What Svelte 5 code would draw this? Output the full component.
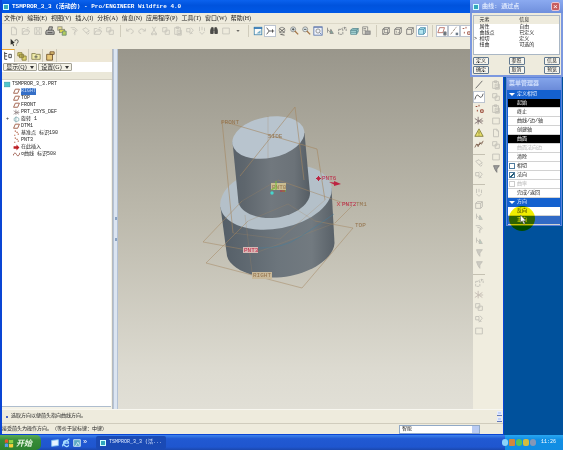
<script>
  const menus = ['文件(F)', '编辑(E)', '视图(V)', '插入(I)', '分析(A)', '信息(N)', '应用程序(P)', '工具(T)', '窗口(W)', '帮助(H)'];
  const toolbar = [
    ['new', 'open', 'save', 'print', 'mail', 'send', 'link', 'folder', 'copies'],
    ['undo', 'redo', 'cut', 'copies', 'paste', 'special', 'regen', 'find', 'box', 'drop'],
    ['repaint', 'axis on', 'orient', 'zoomin', 'zoomout', 'refit', 'spin', 'views', 'layers', 'manager'],
    ['wire', 'hidden', 'nohidden', 'shaded on'],
    ['plane on', 'axisline on', 'points on']
  ];
  const live = ['print', 'mail', 'find', 'drop', 'repaint', 'axis', 'orient', 'zoomin', 'zoomout', 'refit', 'spin', 'views', 'layers', 'manager', 'wire', 'hidden', 'nohidden', 'shaded', 'plane', 'axisline', 'points'];
  const tree = [
    ['part', 'TSMPROR_3_3.PRT', 0],
    ['datum', 'RIGHT', 1, true],
    ['datum', 'TOP', 1],
    ['datum', 'FRONT', 1],
    ['csys', 'PRT_CSYS_DEF', 1],
    ['revolve', '旋转 1', 1],
    ['datum', 'DTM1', 1],
    ['pts', '基准点 标识190', 1],
    ['pts', 'PNT3', 1],
    ['insert', '在此插入', 1],
    ['curve', '¤曲线 标识508', 1]
  ];
  const elements = [['', '属性', '自由'], ['', '曲线点', '已定义'], ['>', '相切', '定义'], ['', '扭曲', '可选的']];
  const tangency = [
    ['起始', 'black'], ['终止', ''], ['曲线/边/轴', ''], ['创建轴', ''], ['曲面', 'black'], ['曲面法向边', 'dim'], ['清除', '']
  ];
  const checks = [['相切', false, false], ['法向', true, false], ['曲率', false, true]];
  const columnA = [['axisline', 'spline on', 'points', 'csys', 'warn', 'chain'], ['link', 'special'], ['regen', 'nohidden', 'spin', 'send', 'spin', 'funnel', 'funnel'], ['views', 'csys', 'copies', 'special', 'box']];
  const columnB = ['paste', 'copies', 'paste', 'box', 'new', 'copies', 'box', 'funnel'];
</script>

{#snippet icon(name)}
  <svg viewBox="0 0 12 12" class="ico" aria-hidden="true">
    {#if name === 'new'}<path d="M3 1.5h4l2 2v7H3zM7 1.5v2h2" />
    {:else if name === 'open' || name === 'folder'}<path d="M1.5 10V3h3l1 1h3v2M1.5 10l2-4h7l-2 4zM7 2q2-1 3 1" />
    {:else if name === 'save'}<path d="M2 2h8v8H2zM4 2v3h4V2M4 10V7h4v3" />
    {:else if name === 'print'}<path d="M4 5l1-4h4L8 5M2 5h8l1 2v3H1V7z" fill="#aaa" stroke="#333" /><path d="M3 8h6" stroke="#222" />
    {:else if name === 'mail'}<rect x="1" y="1" width="5" height="4" fill="#eee38a" stroke="#776" /><rect x="3" y="4" width="6" height="4" fill="#d5cf34" stroke="#776" /><path d="M7 6h4v5H6z" fill="#a7c747" stroke="#576" />
    {:else if name === 'send'}<path d="M2 2h5l3 3-3 3M4 4l4 1-2 4M7 8v3" />
    {:else if name === 'link'}<path d="M2 4l4-2 4 4-4 2zM6 8l2 2 2-2" />
    {:else if name === 'copies'}<path d="M2 2h5v5H2zM5 5h5v5H5z" />
    {:else if name === 'undo'}<path d="M2 3v3h3M2 6q5-5 8 0 0 3-3 3" />
    {:else if name === 'redo'}<path d="M10 3v3H7M10 6Q5 1 2 6q0 3 3 3" />
    {:else if name === 'cut'}<path d="M4 1l4 7M8 1L4 8M3 8.500h2v2H3zM7 8.500h2v2H7z" />
    {:else if name === 'paste'}<path d="M2 2h7v8H2zM4 1h3v2H4zM5 5h5v6H5zM6 7h3M6 9h3" />
    {:else if name === 'special'}<path d="M2 3h4v4H2zM7 2l3 3-4 5M5 8l4 1" />
    {:else if name === 'regen'}<path d="M3 1v5M6 1v4M9 2v4M3 7l3 3 3-3" />
    {:else if name === 'find'}<path d="M2 9V5l1-3h2v7zM7 9V2h2l1 3v4zM5 5h2" fill="#333" stroke="#222" />
    {:else if name === 'box'}<path d="M2 2.500h8v7H2z" />
    {:else if name === 'drop'}<path d="M4 5h4L6 7z" fill="#222" stroke="none" />
    {:else if name === 'repaint'}<rect x="1.500" y="1.500" width="9" height="9" fill="#fff" stroke="#2876a8" /><path d="M1 2.500h10" stroke="#1767b1" stroke-width="2" /><path d="M4 9l5-4v4z" fill="#63a4c5" stroke="none" />
    {:else if name === 'axis'}<path d="M2 2l3 4-3 4M5 6h6M9 4v4" stroke="#222" />
    {:else if name === 'orient'}<circle cx="6" cy="5" r="3.500" /><path d="M3 3l6 5M9 3L3 8M4 10l5 1" stroke="#333" />
    {:else if name === 'zoomin' || name === 'zoomout'}<circle cx="5" cy="4" r="3" fill="#dbeaf2" /><path d="M7 6l4 4" stroke="#98602b" stroke-width="1.500" /><path d={name === 'zoomin' ? 'M3.500 4h3M5 2.500v3' : 'M3.500 4h3'} stroke="#222" />
    {:else if name === 'refit'}<rect x="1" y="1" width="10" height="10" fill="#eef3ff" stroke="#3e5ea2" /><circle cx="6" cy="6" r="2.500" /><path d="M1 1.500h10M8 8l2 2" stroke="#3e5ea2" />
    {:else if name === 'spin'}<path d="M3 2v6M3 4l4 4M7 4l3 5H6z" fill="#6b9f94" />
    {:else if name === 'views'}<path d="M2 4h5v6H2zM5 4l2-2h4v4M9 1v4" stroke-dasharray="3 1" />
    {:else if name === 'layers'}<path d="M2 5l2-2h7L9 5zM2 5h7v5H2zM9 5l2-2v4l-2 3" fill="#a5dbdd" stroke="#417b85" /><path d="M2 7.500h7l2-2" stroke="#417b85" />
    {:else if name === 'manager'}<path d="M2 1h6v9H2zM3 3h3M3 5h3" /><rect x="5" y="6" width="6" height="4" fill="#999" />
    {:else if name === 'wire' || name === 'hidden' || name === 'nohidden' || name === 'shaded'}
      <path d="M2 4h6v6H2zM2 4l2-2h6v6L8 10M8 4l2-2" fill={name === 'shaded' ? '#a9e1ee' : 'none'} stroke={name === 'shaded' ? '#24779b' : '#666'} />
      {#if name === 'wire'}<path d="M4 2v6h6M4 8l-2 2" />{:else if name === 'hidden'}<path d="M4 2v6h6" stroke-dasharray="1 1" />{/if}
    {:else if name === 'plane'}<path d="M1 8l2-6h6L7 8z" stroke="#a34a3c" /><path d="M8 7h3v4H8z" fill="#456" />
    {:else if name === 'axisline'}<path d="M2 10l7-9" stroke="#765" stroke-dasharray="4 1" /><path d="M8 8h3v3H8z" fill="#567" stroke="none" />
    {:else if name === 'points'}<path d="M2 3h2M6 1v2M4 7v2M8 7h3v3H8z" stroke="#9a4a38" stroke-width="1.200" />
    {:else if name === 'line'}<path d="M2 10l8-9" stroke="#555" />
    {:else if name === 'spline'}<path d="M1 9q2-8 5-4t5-3" stroke="#444" />
    {:else if name === 'csys'}<path d="M1 3l9 6M1 9l9-6M5 1v9M7 6h4" stroke="#766" />
    {:else if name === 'warn'}<path d="M6 1l5 9H1zM6 4v3M6 8v1" fill="#e5dd68" stroke="#7e7b35" />
    {:else if name === 'chain'}<path d="M1 9l2-4 2 3 2-5 2 2 2-4M3 5l3 1 3-3" stroke="#785b49" />
    {:else if name === 'funnel'}<path d="M3 2h7L7 6v4L5 7z" fill="#999" />
    {:else if name === 'part'}<rect x="1" y="2" width="9" height="8" fill="#4fc6ce" stroke="#369ea8" />
    {:else if name === 'datum'}<path d="M1 9l3-7h7L8 9z" stroke="#9a563f" stroke-width="1.500" />
    {:else if name === 'revolve'}<path d="M2 4q4-4 8 0v4q-4 3-8 0zM5 1v10" stroke="#5d9299" />
    {:else if name === 'pts'}<path d="M3 2h2M2 9h2M8 7h2M6 4h2" stroke="#b05d3f" stroke-width="2" />
    {:else if name === 'insert'}<path d="M1 4h5V1l5 5-5 5V8H1z" fill="#bd2026" stroke="none" />
    {:else if name === 'curve'}<path d="M0 8q3-8 6-2t6-3" stroke="#985444" stroke-width="1.500" />
    {:else if name === 'modeltree'}<path d="M2 1v9M2 3h3M2 6h3M2 10h3M7 4h3v4H7z" stroke="#333" />
    {:else if name === 'browser'}<path d="M1 2h5v4H1zM3 4h5v4H3zM6 6h5v5H6z" fill="#e0d66d" stroke="#84793a" />
    {:else if name === 'favorites'}<path d="M1 10V3h4l1 1h5v6z" fill="#eee9a7" stroke="#85804e" /><path d="M6 5v4M4 7h4" stroke="#555" />
    {:else if name === 'tools'}<path d="M2 4h7v7H2zM6 1h5v3H6z" fill="#e8c778" stroke="#70502d" />
    {/if}
  </svg>
{/snippet}

<div class="desktop">
  <div class="space">
    <main class="window">
      <header class="title"><span class="cube"></span>TSMPROR_3_3 (活动的) - Pro/ENGINEER Wildfire 4.0</header>
      <nav class="menu">{#each menus as m}<button>{m}</button>{/each}</nav>
      <div class="toolbar">
        {#each toolbar as group}
          <div class="group">
            {#each group as item}
              {@const name = item.split(' ')[0]}
              <button class="tool" class:on={item.endsWith(' on')} class:faint={!live.includes(name)} aria-label={name}>{@render icon(name)}</button>
            {/each}
          </div>
        {/each}
      </div>
      <div class="toolbar second">
        <button class="tool" aria-label="help"><svg viewBox="0 0 12 12" class="ico"><path d="M2 1l5 5H5l1 3-1 1-1-3-2 1z" fill="#111" stroke="none" /><path d="M7 4q0-2 2-2t2 2-2 3M9 8v1" stroke="#333" /></svg></button>
      </div>

      <div class="body">
        <aside class="side">
          <div class="tabs">
            {#each ['modeltree', 'browser', 'favorites', 'tools'] as t, i}<button class:current={i === 0} aria-label={t}>{@render icon(t)}</button>{/each}
          </div>
          <div class="options"><button>显示(Q) <i></i></button><button>设置(G) <i></i></button></div>
          <div class="band"></div>
          <ul class="tree">
            {#each tree as [kind, label, depth, selected]}
              <li class:child={depth}>
                {#if kind === 'revolve'}<span class="plus">+</span>{/if}
                {@render icon(kind)}<span class:selected>{label}</span>
              </li>
            {/each}
          </ul>
        </aside>
        <div class="splitter"><i></i><i></i></div>

        <section class="view">
          <svg viewBox="118 49 355 360" role="img" aria-label="model">
            <defs>
              <linearGradient id="side"><stop offset="0" stop-color="#59626a" /><stop offset=".15" stop-color="#5e666d" /><stop offset=".5" stop-color="#71787e" /><stop offset=".8" stop-color="#6b7278" /><stop offset="1" stop-color="#555d64" /></linearGradient>
              <linearGradient id="base"><stop offset="0" stop-color="#545e67" /><stop offset=".5" stop-color="#6c757c" /><stop offset=".8" stop-color="#727a80" /><stop offset="1" stop-color="#596168" /></linearGradient>
            </defs>
            <path d="M220.500 207L227 256C230 268 250 278 277 277.500C308 276 334 259 334.500 243L331.500 188Z" fill="url(#base)" />
            <ellipse cx="276" cy="197" rx="56.500" ry="31.500" transform="rotate(-11 276 197)" fill="#b4c0c9" />
            <path d="M232.500 142L238.500 203C242 213 256 218.500 272 218C293 217 310 205 310 193L304.500 133Z" fill="url(#side)" />
            <ellipse cx="268.300" cy="137.500" rx="36.500" ry="20.500" transform="rotate(-11 268.300 137.500)" fill="#b8c4ce" />
            <g fill="none" stroke="#a48760" stroke-width=".6">
              <path d="M233 233L222 121L317 149L325 200M295 107L304 180M295 107L240 176" />
              <path d="M203 242L242 201M203 242L258 252M278 180L352 206L335 223M206 263L248 221M315 221L353 228L302 288L206 263" stroke-opacity=".85" />
              <path d="M242 201L278 180M258 252L335 223M248 221L288 204L315 221M245 215L252 272M233 233L280 239L325 200M268 116V158" stroke-opacity=".45" />
            </g>
            <path d="M258 248Q282 249 300 237T334 214" fill="none" stroke="#427f9e" stroke-width=".8" opacity=".6" />
            <g class="tag">
              <text x="221" y="124">FRONT</text><text x="268" y="138">SIDE</text>
              <text x="356" y="206">TM1</text><text x="355" y="227">TOP</text>
              <rect x="252" y="272" width="20" height="7" fill="#c9b99a" /><text x="253" y="277">RIGHT</text>
              <rect x="271" y="183" width="15" height="7" fill="#cabd91" /><text x="272" y="189">PNT0</text>
            </g>
            <path d="M276 181v9M271 190l4-2M282 191h4" stroke="#71bd38" /><path d="M280 191h5" stroke="#c72c38" /><circle cx="272" cy="193" r="1.700" fill="#45d6cf" />
            <g class="tag red">
              <text x="322" y="180">PNT6</text><text x="342" y="206">PNT2</text>
              <rect x="243" y="247" width="15" height="6" fill="#d9b8b5" /><text x="244" y="252">PNT3</text>
              <path d="M316 178.500h5M318.500 176v5" stroke="#b5203c" /><circle cx="318.500" cy="178.500" r="1.800" />
              <path d="M329 182l5 .5V181l7 3-7 2v-1.500z" /><path d="M337 202l3 4M340 202l-3 4" stroke="#c72c38" stroke-width=".6" />
            </g>
          </svg>
        </section>

        <div class="columns">
          <div class="col">
            {#each columnA as part, p}
              <div class="part">{#each part as item, i}<button class="tool" class:on={item.endsWith(' on')} class:faint={p > 0} aria-label={item}>{@render icon(p === 0 && i === 0 ? 'line' : item.split(' ')[0])}</button>{/each}</div>
            {/each}
          </div>
          <div class="col b">{#each columnB as item, i}<button class="tool" class:faint={i < 7} aria-label={item}>{@render icon(item)}</button>{/each}</div>
        </div>
      </div>

      <footer class="messages">
        <div class="line"><p>选取方向以便箭头指向曲线方向。</p><span class="scroll"><i></i><i></i></span></div>
        <div class="line prompt"><span>接受箭头为操作方向。（等价于鼠标键：中键）</span>
          <select aria-label="过滤器"><option>智能</option></select>
        </div>
      </footer>
    </main>

    <section class="dialog">
      <header><span class="cube"></span><b>曲线: 通过点</b><button aria-label="关闭">×</button></header>
      <table>
        <thead><tr><th></th><th>元素</th><th>信息</th></tr></thead>
        <tbody>{#each elements as row}<tr>{#each row as c}<td>{c}</td>{/each}</tr>{/each}</tbody>
      </table>
      <div class="actions">{#each ['定义', '参照', '信息', '确定', '取消', '预览'] as a}<button>{a}</button>{/each}</div>
    </section>

    <section class="manager">
      <header>菜单管理器</header>
      <h2>定义相切</h2>
      <div class="list">
        {#each tangency as [label, kind]}<button class={kind}>{label}</button>{/each}
        {#each checks as [label, checked, disabled]}
          <label class:dim={disabled}><input type="checkbox" {checked} {disabled} />{label}</label>
        {/each}
        <button>完成/返回</button>
      </div>
      <h2>方向</h2>
      <div class="list"><button>反向</button><button class="blue">正向</button></div>
      <span class="halo"></span>
      <svg class="pointer" viewBox="0 0 8 12"><path d="M1 0v9l2-2 2 4 1.500-1-2-3h3z" fill="#fff" stroke="#555" stroke-width=".6" /></svg>
    </section>
  </div>

  <footer class="taskbar">
    <button class="start"><svg viewBox="0 0 12 12" class="ico"><path d="M1 2q2-1 4 0v4q-2-1-4 0z" fill="#e8552d" stroke="none" /><path d="M6 2q2 1 5 0v4q-3 1-5 0z" fill="#8fd244" stroke="none" /><path d="M1 7q2-1 4 0v4q-2-1-4 0z" fill="#5a9cf0" stroke="none" /><path d="M6 7q2 1 5 0v4q-3 1-5 0z" fill="#f6cf3b" stroke="none" /></svg>开始</button>
    <div class="quick">
      <svg viewBox="0 0 12 12" class="ico"><path d="M2 3l8-1v7l-8 1z" fill="#e7f4ff" stroke="#88c9f4" /></svg>
      <svg viewBox="0 0 12 12" class="ico"><path d="M3 6h6q0-3-3-3T3 6t3 4 3-2M2 10Q1 7 10 1" stroke="#a6dcff" stroke-width="1.500" /></svg>
      <svg viewBox="0 0 12 12" class="ico"><path d="M2 2h8v8H2zM4 10l3-5 2 4" fill="#5da9c4" stroke="#d8eef7" /></svg>
      <span>»</span>
    </div>
    <button class="task"><span class="cube"></span>TSMPROR_3_3 (活...</button>
    <div class="tray"><i class="c1"></i><i class="c2"></i><i class="c3"></i><i class="c4"></i><i class="c5"></i><time>11:26</time></div>
  </footer>
</div>

<style>
  .desktop { display: flex; flex-direction: column; min-height: 100vh; background: #00519c; font: 5px/7px "Liberation Mono", "Noto Sans CJK SC", monospace; color: #222; text-spacing-trim: space-all; }
  .desktop :is(button, select, input) { font: inherit; color: inherit; margin: 0; padding: 0; border: 0; background: none; box-sizing: border-box; }
  .space { flex: 1; position: relative; display: flex; padding-right: 59px; }
  .ico { width: 10px; height: 10px; display: block; flex: none; fill: none; stroke: #777; stroke-width: 1; }
  .cube { width: 6px; height: 6px; flex: none; box-sizing: border-box; border: 1px solid #d4ffff; background: #31a8bc; }

  .window { flex: 1; min-width: 0; display: flex; flex-direction: column; background: #eeebdd; border: solid #0a45d4; border-width: 0 1px 1px 2px; }
  .title { height: 13px; display: flex; align-items: center; gap: 3px; padding-left: 1px; white-space: pre; color: #fff; font-size: 6px; font-weight: bold; background: linear-gradient(#0b62ee, #0053dd 40%, #0058e6); }
  .menu { height: 10px; display: flex; align-items: center; gap: 4px; padding-left: 2px; font: 6px/8px "Liberation Serif", "Noto Sans CJK SC", serif; border-bottom: 1px solid #dcd8c8; white-space: nowrap; }
  .toolbar { height: 13px; display: flex; align-items: center; padding-left: 6px; }
  .toolbar.second { height: 12px; padding-left: 6px; }
  .toolbar .tool .ico { opacity: .85; }
  .group { display: flex; }
  .group + .group { margin-left: 4px; padding-left: 3px; border-left: 1px solid #d0ccbc; }
  .desktop .tool { width: 12px; height: 12px; display: grid; place-items: center; flex: none; }
  .desktop .tool.on { background: #fff; border: 1px solid #bcc4cf; }
  .faint { opacity: .4; }

  .body { flex: 1; display: flex; min-height: 0; }
  .side { width: 111px; flex: none; display: flex; flex-direction: column; background: #f5f3e8; border-right: 1px solid #b5b9bd; box-sizing: border-box; }
  .tabs { display: flex; height: 13px; gap: 1px; background: #eee8d7; }
  .desktop .tabs button { width: 13px; display: grid; place-items: center; border-right: 1px solid #ccc8ba; }
  .desktop .tabs .current { background: #fff; border-top: 1px solid #efa62f; }
  .options { display: flex; height: 10px; padding: 1px; gap: 1px; background: #fff; box-sizing: border-box; }
  .desktop .options button { width: 34px; display: flex; align-items: center; justify-content: center; gap: 3px; border: 1px solid #a5a397; border-radius: 1px; background: #f3f1e6; font: 6px/6px "Liberation Serif", "Noto Sans CJK SC", serif; }
  .options i { border: 2px solid transparent; border-top: 3px solid #333; border-bottom: 0; }
  .band { height: 8px; background: #ebe8d9; border-bottom: 1px solid #d7d3c5; box-sizing: border-box; }
  .tree { flex: 1; margin: 0 1px 2px 0; padding: 1px 0 0 2px; list-style: none; background: #fff; border-bottom: 1px solid #aebdce; }
  .tree li { height: 7px; display: flex; align-items: center; gap: 1px; white-space: pre; position: relative; }
  .tree .child { padding-left: 9px; }
  .tree .ico { width: 7px; height: 7px; }
  .tree .selected { background: #356fc7; color: #c9ddfa; }
  .plus { position: absolute; left: 2px; }
  .splitter { width: 5px; flex: none; box-sizing: border-box; border: solid #b4c2d5; border-width: 0 1px; background: #dce5f1; display: flex; flex-direction: column; align-items: center; justify-content: center; gap: 18px; }
  .splitter i { width: 2px; height: 3px; background: #8ba3c2; }
  .view { flex: 1; min-width: 0; display: grid; background: linear-gradient(#99968b, #bbb8ab 45%, #dddbd1 90%, #e1dfd6); }
  .view svg { width: 100%; height: 100%; min-height: 0; }
  .tag { font: 6px "Liberation Mono", monospace; fill: #94734c; }
  .red { fill: #bd2442; }
  .columns { width: 30px; flex: none; display: flex; gap: 5px; padding-top: 30px; box-sizing: border-box; background: #f0eddf; }
  .col { display: flex; flex-direction: column; }
  .part + .part { border-top: 1px solid #c5c1b2; margin-top: 3px; padding-top: 2px; }

  .messages { height: 25px; border-top: 1px solid #f8f7f0; box-sizing: border-box; }
  .line { height: 13px; display: flex; align-items: center; justify-content: space-between; box-sizing: border-box; }
  .line p { margin: 0; padding-left: 9px; position: relative; }
  .line p::before { content: ""; position: absolute; left: 4px; top: 3px; width: 2px; height: 2px; border-radius: 50%; background: #1237b8; }
  .scroll { display: grid; gap: 1px; margin-right: 1px; }
  .scroll i { width: 5px; height: 5px; background: #c3d2f5; box-shadow: inset 0 0 0 1px #e2eaff; border-bottom: 1px solid #6378b8; box-sizing: border-box; }
  .prompt { height: 11px; border-top: 1px solid #d0ccbd; }
  .desktop .prompt select { appearance: none; width: 81px; height: 9px; margin-right: 23px; padding-left: 2px; border: 1px solid #91a9c6; background: linear-gradient(#b9cbf3, #b9cbf3) right / 7px 7px no-repeat #fff; font-size: 5px; line-height: 7px; }

  .dialog { position: absolute; top: 0; right: 0; width: 93px; height: 77px; box-sizing: border-box; border: 2px solid #7c98df; border-top: 0; background: #eeebdd; }
  .dialog header { height: 13px; margin: 0 -2px; padding: 0 3px; display: flex; align-items: center; gap: 3px; background: linear-gradient(#8baaf0, #6f8fdd); color: #dce6fc; font-size: 6px; }
  .dialog header b { flex: 1; }
  .desktop .dialog header button { width: 9px; height: 9px; background: #c75c5e; border: 1px solid #e8c6d5; border-radius: 2px; color: #fff; font-size: 8px; line-height: 6px; }
  .dialog table { width: 87px; height: 40px; margin: 2px 1px 0; border-collapse: collapse; background: #fff; border: 1px solid #aab7c5; table-layout: fixed; display: block; box-sizing: border-box; font-size: 5px; line-height: 6px; }
  .dialog :is(td, th) { padding: 0; height: 6px; width: 46px; text-align: left; font-weight: normal; }
  .dialog :is(td, th):first-child { width: 6px; }
  .dialog th { height: 8px; background: #eeebdd; }
  .actions { display: grid; grid-template-columns: repeat(3, 16px); justify-content: space-between; gap: 1px; padding: 2px 1px; }
  .desktop .actions button { height: 8px; border: 1px solid #61788f; border-radius: 1px; background: #f7f6ef; line-height: 6px; }

  .manager { position: absolute; top: 77px; right: 1px; width: 56px; box-sizing: border-box; border: 1px solid #5c83dc; background: #1461cf; }
  .manager header { height: 12px; line-height: 12px; padding-left: 2px; font-size: 6px; font-weight: bold; color: #cfdefc; background: linear-gradient(#83a4ea, #6b8bd9); }
  .manager h2 { margin: 0; height: 9px; padding-left: 10px; font-size: 5px; line-height: 9px; font-weight: normal; color: #e6efff; position: relative; }
  .manager h2::before { content: ""; position: absolute; left: 2px; top: 3px; border: 3px solid transparent; border-top-color: #fff; border-bottom: 0; }
  .list { background: #fff; margin: 0 1px; }
  .desktop .list :is(button, label) { width: 100%; height: 9px; padding-left: 9px; display: flex; align-items: center; line-height: 8px; border-bottom: 1px solid #d2d2d2; box-sizing: border-box; text-align: left; }
  .desktop .list label { padding-left: 1px; gap: 2px; }
  .desktop .list .black { background: #000; color: #fff; }
  .desktop .list .dim { color: #b5b5b5; }
  .desktop .list .blue { background: #316ac5; color: #fff; }
  .desktop .list input { appearance: none; width: 6px; height: 6px; border: 1px solid #4f7c9e; background: #fff; }
  .desktop .list input:disabled { border-color: #ccc; }
  .desktop .list input:checked { background: linear-gradient(135deg, #fff 40%, #275c76 40% 70%, #fff 70%); }
  .halo { position: absolute; left: 2px; bottom: -6px; width: 26px; height: 25px; border-radius: 50%; background: #f1ed00; mix-blend-mode: multiply; }
  .pointer { position: absolute; left: 12px; bottom: 0; width: 8px; height: 10px; }

  .taskbar { height: 15px; display: flex; align-items: center; background: linear-gradient(#3d83ee, #2159d2 25%, #1f56cf 80%, #1a47ae); color: #fff; font-size: 5px; }
  .desktop .start { width: 41px; height: 100%; padding-left: 4px; display: flex; align-items: center; gap: 2px; border-radius: 0 5px 5px 0; background: linear-gradient(#5cad58, #378c37 35%, #2d812f); color: #eaf8e5; font: italic bold 8px/12px "Noto Sans CJK SC", sans-serif; }
  .quick { display: flex; align-items: center; gap: 1px; padding-left: 9px; width: 46px; box-sizing: border-box; }
  .quick span { font-size: 7px; }
  .desktop .task { width: 70px; height: 13px; margin-left: 9px; padding-left: 4px; display: flex; align-items: center; gap: 3px; white-space: pre; background: #1a4ab5; border-radius: 2px; color: #dbe8ff; }
  .tray { width: 58px; height: 100%; margin-left: auto; display: flex; align-items: center; gap: 1px; background: linear-gradient(#2aa7f1, #118fe5 30%, #128ce2); }
  .tray i { width: 6px; height: 7px; border-radius: 3px; background: #8bd4fb; }
  .tray .c1 { margin-left: -3px; }
  .tray .c2 { background: #d2873c; border-radius: 1px; }
  .tray .c3 { background: #54c55c; }
  .tray .c4 { background: #d4bd3d; border-radius: 2px; }
  .tray .c5 { background: #8597b7; }
  .tray time { margin-left: 4px; }
</style>
